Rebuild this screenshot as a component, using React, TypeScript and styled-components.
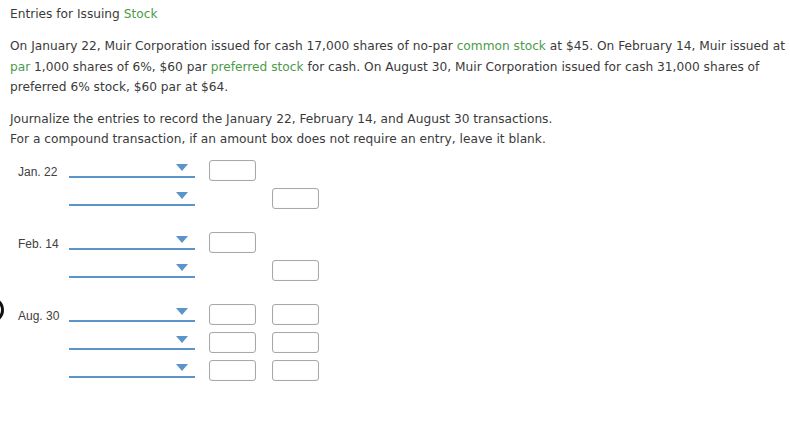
import styled, { createGlobalStyle } from "styled-components";

const GlobalStyle = createGlobalStyle`
  html, body {
    margin: 0;
    padding: 0;
    background: #fff;
  }
  body {
    font-family: "DejaVu Sans", Verdana, sans-serif;
    color: #3a3a3a;
  }
`;

const Page = styled.div`
  position: relative;
  width: 790px;
  height: 422px;
  box-sizing: border-box;
  padding: 4px 0 0 10px;
  overflow: hidden;
`;

const Title = styled.div`
  font-size: 12.2px;
  line-height: 20px;
  margin-bottom: 12px;
`;

const Term = styled.span`
  color: #4b9b4b;
`;

const Paragraph = styled.p<{ $gap?: number }>`
  margin: 0 0 ${(p) => p.$gap ?? 0}px;
  width: 780px;
  font-size: 12.2px;
  line-height: 20.6px;
`;

const Journal = styled.div`
  display: flex;
  flex-direction: column;
  gap: 16px;
  margin-top: 6px;
`;

const Group = styled.div`
  display: flex;
  flex-direction: column;
`;

const Row = styled.div`
  display: flex;
  height: 28px;
`;

const DateLabel = styled.div`
  width: 51px;
  padding: 9px 0 0 8px;
  font-family: "Liberation Sans", Arial, sans-serif;
  font-size: 12px;
  line-height: 14px;
  color: #404040;
`;

const Account = styled.div`
  position: relative;
  box-sizing: border-box;
  width: 126px;
  height: 22px;
  border-bottom: 2px solid #5a94cb;
`;

const Arrow = styled.span`
  position: absolute;
  right: 7px;
  top: 8px;
  width: 0;
  height: 0;
  border-left: 6.5px solid transparent;
  border-right: 6.5px solid transparent;
  border-top: 7px solid #5a94cb;
`;

const AmountCell = styled.div<{ $first?: boolean }>`
  width: 47px;
  margin-left: ${(p) => (p.$first ? 14 : 16)}px;
  padding-top: 4px;
`;

const AmountBox = styled.div`
  box-sizing: border-box;
  width: 47px;
  height: 21px;
  border: 1px solid #a8a8a8;
  border-radius: 3px;
  background: #fff;
  box-shadow: inset 0 0 1px rgba(0, 0, 0, 0.15);
`;

const EdgeMark = styled.svg`
  position: absolute;
  left: 0;
  top: 296px;
`;

type Line = { debit: boolean; credit: boolean };

const entries: { date: string; lines: Line[] }[] = [
  {
    date: "Jan. 22",
    lines: [
      { debit: true, credit: false },
      { debit: false, credit: true },
    ],
  },
  {
    date: "Feb. 14",
    lines: [
      { debit: true, credit: false },
      { debit: false, credit: true },
    ],
  },
  {
    date: "Aug. 30",
    lines: [
      { debit: true, credit: true },
      { debit: true, credit: true },
      { debit: true, credit: true },
    ],
  },
];

const App = () => {
  return (
    <Page>
      <GlobalStyle />
      <EdgeMark width="6" height="28" viewBox="0 0 6 28">
        <circle cx="-9" cy="14" r="11.5" fill="none" stroke="#111" strokeWidth="3" />
      </EdgeMark>
      <Title>
        Entries for Issuing <Term>Stock</Term>
      </Title>
      <Paragraph $gap={11}>
        On January 22, Muir Corporation issued for cash 17,000 shares of no-par{" "}
        <Term>common stock</Term> at $45. On February 14, Muir issued at{" "}
        <Term>par</Term> 1,000 shares of 6%, $60 par <Term>preferred stock</Term>{" "}
        for cash. On August 30, Muir Corporation issued for cash 31,000 shares of
        preferred 6% stock, $60 par at $64.
      </Paragraph>
      <Paragraph>
        Journalize the entries to record the January 22, February 14, and August 30
        transactions.
      </Paragraph>
      <Paragraph>
        For a compound transaction, if an amount box does not require an entry, leave it
        blank.
      </Paragraph>
      <Journal>
        {entries.map((entry) => (
          <Group key={entry.date}>
            {entry.lines.map((line, i) => (
              <Row key={i}>
                <DateLabel>{i === 0 ? entry.date : ""}</DateLabel>
                <Account>
                  <Arrow />
                </Account>
                <AmountCell $first>{line.debit && <AmountBox />}</AmountCell>
                <AmountCell>{line.credit && <AmountBox />}</AmountCell>
              </Row>
            ))}
          </Group>
        ))}
      </Journal>
    </Page>
  );
};

export default App;
